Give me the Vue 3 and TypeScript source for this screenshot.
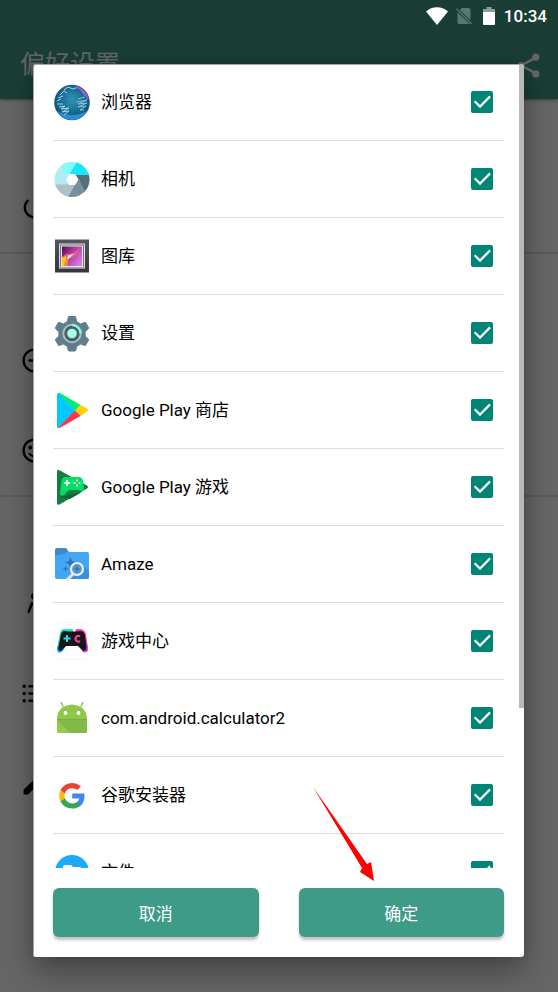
<script setup lang="ts">
import { ref } from 'vue'

interface AppItem {
  id: string
  name: string
  checked: boolean
}

const apps = ref<AppItem[]>([
  { id: 'browser', name: '浏览器', checked: true },
  { id: 'camera', name: '相机', checked: true },
  { id: 'gallery', name: '图库', checked: true },
  { id: 'settings', name: '设置', checked: true },
  { id: 'store', name: 'Google Play 商店', checked: true },
  { id: 'games', name: 'Google Play 游戏', checked: true },
  { id: 'amaze', name: 'Amaze', checked: true },
  { id: 'gamecenter', name: '游戏中心', checked: true },
  { id: 'calculator', name: 'com.android.calculator2', checked: true },
  { id: 'google', name: '谷歌安装器', checked: true },
  { id: 'files', name: '文件', checked: true },
])

// Material glyphs of the preference rows, grouped by section
const sections: string[][] = [
  ['M13 3h-2v10h2V3zm4.83 2.17l-1.42 1.42C17.99 7.86 19 9.81 19 12c0 3.87-3.13 7-7 7s-7-3.13-7-7c0-2.19 1.01-4.14 2.58-5.42L6.17 5.17C4.23 6.82 3 9.26 3 12c0 4.97 4.03 9 9 9s9-4.03 9-9c0-2.74-1.23-5.18-3.17-6.83z'],
  [
    'M7 11v2h10v-2H7zm5-9C6.48 2 2 6.48 2 12s4.48 10 10 10 10-4.48 10-10S17.52 2 12 2zm0 18c-4.41 0-8-3.59-8-8s3.59-8 8-8 8 3.59 8 8-3.59 8-8 8z',
    'M12 2C6.47 2 2 6.47 2 12s4.47 10 10 10 10-4.5 10-10S17.5 2 12 2zm0 18c-4.42 0-8-3.58-8-8s3.58-8 8-8 8 3.58 8 8-3.58 8-8 8zM8.5 7.9a1.6 1.6 0 1 0 0 3.2 1.6 1.6 0 0 0 0-3.2zm7 0a1.6 1.6 0 1 0 0 3.2 1.6 1.6 0 0 0 0-3.2zM12 16c-1.5 0-2.8-.8-3.5-2H6.8c.8 2 2.8 3.5 5.2 3.5s4.4-1.5 5.2-3.5h-1.7c-.7 1.2-2 2-3.5 2z',
  ],
  [
    'M12 3a3 3 0 0 0-2 5.200 3 3 0 0 0 4 0A3 3 0 0 0 12 3zM9.300 10.500L6.500 17.500V20.500L8 19.500 11.300 11.300zM14.700 10.500L17.500 17.500V20.500L16 19.500 12.700 11.300z',
    'M3.500 4.500a1.500 1.500 0 1 0 0 3 1.500 1.500 0 0 0 0-3zm0 6a1.500 1.500 0 1 0 0 3 1.500 1.500 0 0 0 0-3zm0 6a1.500 1.500 0 1 0 0 3 1.500 1.500 0 0 0 0-3zM7 19h14v-2H7v2zm0-6h14v-2H7v2zm0-8v2h14V5H7z',
    'M3 17.250V21h3.750L17.810 9.940l-3.750-3.750L3 17.250zM20.710 7.040a1 1 0 0 0 0-1.410l-2.340-2.340a1 1 0 0 0-1.410 0l-1.830 1.830 3.750 3.750 1.830-1.830z',
  ],
]
</script>

<template>
  <div class="screen">
    <div class="page" inert>
      <header class="app-bar">
        <h1 class="title">偏好设置</h1>
        <svg class="glyph share" viewBox="0 0 24 24" aria-hidden="true">
          <path d="M18 5.500L6 12l12 6.500" fill="none" stroke="currentColor" stroke-width="2" />
          <circle cx="18" cy="5" r="3" /><circle cx="6" cy="12" r="3" /><circle cx="18" cy="19" r="3" />
        </svg>
      </header>
      <main class="content">
        <section v-for="(icons, s) in sections" :key="s" class="prefs">
          <div v-for="(d, i) in icons" :key="i" class="pref">
            <svg class="glyph" viewBox="0 0 24 24" aria-hidden="true"><path :d="d" /></svg>
          </div>
        </section>
      </main>
    </div>

    <div class="status">
      <svg class="wifi" viewBox="0 0 22 18" aria-hidden="true"><path d="M0 4.500C6-1.200 16-1.200 22 4.500L11 18z" fill="#fff" /></svg>
      <svg class="sim" viewBox="0 0 16 18" aria-hidden="true">
        <path d="M5.500 1H13q1.500 0 1.500 1.500V13.600L3.800 3zM1.500 5.200L13.600 17H3q-1.500 0-1.500-1.500z" fill="#5a766e" />
        <path d="M.5 1.800L15.500 17" stroke="#5a766e" stroke-width="1.400" />
      </svg>
      <svg class="battery" viewBox="0 0 12 18" aria-hidden="true">
        <path d="M3.500 0h5v2H12v4H0V2h3.500z" fill="#8d9f9a" /><path d="M0 5h12v12q0 1-1 1H1q-1 0-1-1z" fill="#fff" />
      </svg>
      <time>10:34</time>
    </div>

    <div class="scrim">
      <div class="dialog" role="dialog" aria-modal="true">
        <div class="list-wrap">
          <ul class="list">
            <li v-for="app in apps" :key="app.id">
              <label class="row">
                <svg class="icon" viewBox="0 0 38 38" aria-hidden="true">
                  <g v-if="app.id === 'browser'">
                    <defs>
                      <radialGradient id="globe" cx=".5" cy=".42" r=".58">
                        <stop offset="0" stop-color="#2e91b4" /><stop offset=".6" stop-color="#176a92" /><stop offset="1" stop-color="#124a78" />
                      </radialGradient>
                    </defs>
                    <circle cx="19" cy="19.500" r="17.800" fill="url(#globe)" />
                    <path d="M4 28q14 8 30 0-5 9-15 9T4 28z" fill="#278fd0" />
                    <g fill="none" stroke-width="1">
                      <path d="M11 7l4-3 5 2 5-2M7 12l4-4 3 2M5 15l5-2M4 18l4-2M4 21l6 0M6 24l6-1-4 3 8-1-7 4 7-1-5 4" stroke="#a7d7e8" />
                      <path d="M25 16l7-2M23 19l11-2-9 4 9-1-9 4 8-1-6 4 4 0" stroke="#83c4dc" />
                      <path d="M23 4q9 3 12 12" stroke="#c44be8" stroke-width="1.600" />
                      <path d="M28 7l4 6" stroke="#8d7ee0" />
                    </g>
                    <g stroke="#55b5ce" stroke-width=".7" stroke-dasharray=".7 2"><path d="M14 12h12M14 16h11M15 20h8M15 24h9" /></g>
                  </g>

                  <g v-else-if="app.id === 'camera'">
                    <clipPath id="lens"><circle cx="19" cy="19.500" r="17.500" /></clipPath>
                    <g clip-path="url(#lens)">
                      <path d="M0 0h38v38H0z" fill="#b2ebf2" />
                      <path d="M7 5L15 0h10L16 15h-3z" fill="#84fbff" />
                      <path d="M25 0h13v15H16z" fill="#18e5fb" />
                      <path d="M16 15h22v18h-7l-9-9z" fill="#546e7a" />
                      <path d="M26 19l7 14-8 6H14l8-15z" fill="#78909c" />
                      <path d="M0 24.500h22L13 40H0z" fill="#b0bec5" />
                    </g>
                    <path d="M16.500 14.500h5.500l3 5-3 5h-5.500l-3-5z" fill="#fff" stroke="#fff" stroke-linejoin="round" />
                  </g>

                  <g v-else-if="app.id === 'gallery'">
                    <defs>
                      <linearGradient id="frame" x2="0" y2="1"><stop stop-color="#55565f" /><stop offset="1" stop-color="#35333c" /></linearGradient>
                      <linearGradient id="photo" x2="1" y2=".7"><stop stop-color="#43104e" /><stop offset=".45" stop-color="#b63399" /><stop offset="1" stop-color="#d17be5" /></linearGradient>
                    </defs>
                    <path d="M2 2.500h34v33H2z" fill="url(#frame)" />
                    <path d="M6 6.500h26v25H6z" fill="#dedee0" /><path d="M7 7.500h24v23H7z" fill="#77717a" />
                    <path d="M8 8.500h22V30H8z" fill="#e6e6e8" />
                    <path d="M9 9.500h20V29H9z" fill="url(#photo)" />
                    <path d="M9 29V20q4-4 9-3 5-2 9-6-3 8-9 10-5 2-5 8z" fill="#e5628b" />
                    <path d="M9 29v-8l4-2v4l-2 6z" fill="#ffc414" />
                    <path d="M11 29q0-5 5-8l-2 8z" fill="#f58a3c" />
                    <path d="M15 18.500l6-2-4 4-3 2z" fill="#ffe3dc" />
                  </g>

                  <g v-else-if="app.id === 'settings'">
                    <path d="M15.500 2.500h7l1.300 5.200 3.700 2.200 4.900-1.600 3.400 5.900-3.700 3.600v4.300l3.700 3.600-3.400 5.900-4.900-1.500-3.700 2.100-1.300 4.800h-7l-1.300-4.800-3.700-2.100-4.900 1.500-3.400-5.900 3.700-3.600v-4.300l-3.700-3.600 3.400-5.900 4.900 1.600 3.700-2.200z" fill="#607d8b" stroke="#607d8b" stroke-linejoin="round" />
                    <circle cx="19" cy="19.500" r="8.700" fill="#455a64" stroke="#b0bec5" stroke-width="2" />
                    <path d="M19 11a8.500 8.500 0 0 1 8.500 8.500" fill="none" stroke="#86f5df" stroke-width="2.500" />
                    <circle cx="19" cy="19.500" r="5.200" fill="#a7ffeb" stroke="#526973" />
                  </g>

                  <g v-else-if="app.id === 'store'">
                    <path d="M4 3.500q0-2 2-1.500l17.500 17L5 37q-1 0-1-1.500z" fill="#00c8ff" />
                    <path d="M5 2q1-.5 2 .1L27.500 14 22 19.500z" fill="#00ee76" />
                    <path d="M27.500 14l6.600 3.800q1.900 1.200 0 2.400L27.500 25 22 19.500z" fill="#ffcd05" />
                    <path d="M5 37l17-17.500 5.500 5.500L7 36.800q-1 .6-2 .2z" fill="#f93749" />
                  </g>

                  <g v-else-if="app.id === 'games'">
                    <path d="M4 4q0-3 2.500-1.800L34 17.600q2 1.500 0 3L6.500 36.400Q4 37.500 4 34.800z" fill="#167d42" />
                    <path d="M7 29L29 24l-12 7z" fill="#116637" />
                    <path d="M12.500 9h13q4 0 4.500 4l1 6.500q0 3.500-3.500 3.200L24 22H16l-5 5q-4 2-4-2.500L8.500 13q.5-4 4-4z" fill="#06dc67" />
                    <path d="M14 12v6M11 15h6" stroke="#fff" stroke-width="1.600" />
                    <g fill="#e3fff0"><circle cx="24" cy="12.500" r="1.100" /><circle cx="24" cy="17.500" r="1.100" /><circle cx="21.500" cy="15" r="1.100" /><circle cx="26.500" cy="15" r="1.100" /></g>
                  </g>

                  <g v-else-if="app.id === 'amaze'">
                    <path d="M2 5q0-2 2-2h9l3 4h-1v7H2z" fill="#4286ca" />
                    <path d="M2 10q8 0 12-3h20q2 0 2 2v23q0 2-2 2H4q-2 0-2-2z" fill="#42a5f5" />
                    <path d="M27 18l9 8v6q0 2-2 2H17l1-3z" fill="#368fe0" />
                    <path d="M17.500 12l1.500 4 4 1.500-4 1.500-1.500 4-1.500-4-4-1.500 4-1.500z" fill="#2e71bd" />
                    <path d="M12.500 21l.8 2 2 .8-2 .8-.8 2-.8-2-2-.8 2-.8z" fill="#2e71bd" />
                    <path d="M20 29l-5.500 5.500" stroke="#e8e7e8" stroke-width="3" stroke-linecap="round" />
                    <circle cx="24" cy="24" r="6" fill="#5d96ce" stroke="#efefef" stroke-width="2.200" />
                    <path d="M24 20.500l1 2.500 2.500 1-2.500 1-1 2.500-1-2.500-2.500-1 2.500-1z" fill="#3976b8" />
                  </g>

                  <g v-else-if="app.id === 'gamecenter'">
                    <rect x=".5" y=".5" width="37" height="37" rx="8" fill="#fff" stroke="#f6f6f6" />
                    <path d="M11 7h9v5L10 29q-5 3-6-2L7 11q1-4 4-4z" fill="#1ce3c2" />
                    <path d="M4.200 24l6 4Q5 34 4 27z" fill="#358cff" />
                    <path d="M23 7h5q4 1 5 5l2 15q0 4-5 3l-9-17z" fill="#ff42a0" />
                    <path d="M34 21l1 6q0 4-5 3l-2-4z" fill="#d63cff" />
                    <path d="M11 9q8 1 16 0 4 0 5 4l1.500 12q0 5-4 3.500L25 24H13l-4.500 4.500Q5 30 5.500 25L8 12q1-3 3-3z" fill="#17151c" />
                    <path d="M14 13v7M10.500 16.500h7" stroke="#29d8eb" stroke-width="2" />
                    <path d="M27 14.500a2.800 2.800 0 1 0 0 4.500" fill="none" stroke="#ff42a0" stroke-width="2" />
                  </g>

                  <g v-else-if="app.id === 'calculator'">
                    <path d="M10 7L8 3.500M28 7l2-3.500" stroke="#8bc34a" stroke-width="1.500" stroke-linecap="round" />
                    <path d="M4 20q0-8 6-12 9-5 18 0 6 4 6 12v12q0 2-2 2H6q-2 0-2-2z" fill="#8fc84b" />
                    <path d="M4 20.500h30V32q0 2-2 2H18L4 21z" fill="#82b947" />
                    <path d="M4 20.500h30" stroke="#7cad43" />
                    <path d="M4 21l12 13H6q-2 0-2-2z" fill="#91ca4c" />
                    <circle cx="12.500" cy="14" r="1.900" fill="#fff" /><circle cx="25.500" cy="14" r="1.900" fill="#fff" />
                  </g>

                  <g v-else-if="app.id === 'google'">
                    <g transform="translate(6.500 7)">
                      <path d="M25 13c0-.9-.1-1.800-.2-2.600H12.700v5h7a6 6 0 0 1-2.600 3.900v3.300h4.200C23.700 20.300 25 17 25 13z" fill="#4285f4" />
                      <path d="M12.700 25.500c3.500 0 6.400-1.100 8.600-3.100l-4.200-3.200a7.800 7.800 0 0 1-11.700-4H1.100v3.300a13 13 0 0 0 11.600 7z" fill="#34a853" />
                      <path d="M5.400 15.200a7.600 7.600 0 0 1 0-4.900V6.900H1.100a13 13 0 0 0 0 11.600z" fill="#fbbc05" />
                      <path d="M12.700 5.200c1.900 0 3.600.7 5 1.900l3.700-3.700A13 13 0 0 0 1.100 6.900l4.300 3.400a7.700 7.700 0 0 1 7.300-5.100z" fill="#ea4335" />
                    </g>
                  </g>

                  <g v-else>
                    <circle cx="19" cy="19" r="17" fill="#1caaf4" />
                    <path d="M10 14q0-2 2-2h6l2 2h7q1 0 1 1v11H10z" fill="#fff" />
                  </g>
                </svg>
                <span class="name">{{ app.name }}</span>
                <input v-model="app.checked" class="check" type="checkbox" />
              </label>
            </li>
          </ul>
          <div class="thumb"></div>
        </div>

        <div class="actions">
          <button type="button">取消</button>
          <button type="button">确定</button>
          <svg class="arrow" viewBox="0 0 62 95" aria-hidden="true">
            <path d="M0 0L54 77 58 75 61 94 47 85 49 81z" fill="#f00" />
          </svg>
        </div>
      </div>
    </div>
  </div>
</template>

<style>
body {
  margin: 0;
  background: #666;
}
</style>

<style scoped>
.screen {
  position: relative;
  height: 100vh;
  overflow: hidden;
  background: #666;
  font-family: Roboto, "Noto Sans CJK SC", sans-serif;
  font-size: 17px;
  color: #000;
}
.app-bar {
  display: flex;
  align-items: center;
  justify-content: space-between;
  box-sizing: border-box;
  height: 99px;
  padding: 31px 15px 0 20px;
  background: #1a3e36;
  color: #666;
  box-shadow: 0 1px 3px rgba(0, 0, 0, 0.4);
}
.title {
  margin: 0;
  font-size: 25px;
  font-weight: 400;
  line-height: 36px;
}
.glyph {
  display: block;
  width: 29px;
  height: 29px;
  fill: currentColor;
}
.content {
  padding-top: 2px;
}
.prefs {
  padding-top: 61px;
  border-bottom: 2px solid #5a5a5a;
}
.prefs:last-child {
  border-bottom: 0;
}
.pref {
  display: flex;
  align-items: center;
  height: 90px;
  padding: 0 20px;
}
.status {
  position: absolute;
  top: 0;
  right: 0;
  left: 0;
  display: flex;
  align-items: center;
  justify-content: flex-end;
  height: 31px;
  padding-right: 11px;
  color: #fff;
}
.wifi {
  width: 22px;
  height: 18px;
  margin-right: 8px;
}
.sim {
  width: 16px;
  height: 18px;
  margin-right: 11px;
}
.battery {
  width: 12px;
  height: 18px;
  margin-right: 9px;
}
.status time {
  font-weight: 500;
  line-height: 24px;
}
.scrim {
  position: absolute;
  inset: 0;
  display: flex;
  box-sizing: border-box;
  padding: 64px 34px 35px 33px;
}
.dialog {
  display: flex;
  flex: 1;
  flex-direction: column;
  min-width: 0;
  border-radius: 3px;
  background: #fff;
  box-shadow: inset 1px 1px #a3a8a6, 0 14px 32px rgba(0, 0, 0, 0.35), 0 0 10px rgba(0, 0, 0, 0.1);
}
.list-wrap {
  position: relative;
  flex: 1;
  min-height: 0;
}
.list {
  box-sizing: border-box;
  height: 100%;
  margin: 0;
  padding: 0 20px;
  overflow-y: auto;
  scrollbar-width: none;
  list-style: none;
}
.row {
  display: flex;
  align-items: center;
  gap: 10px;
  box-sizing: border-box;
  height: 77px;
  padding-right: 11px;
  border-bottom: 1px solid #dcdcdc;
}
.icon {
  flex: none;
  width: 38px;
  height: 38px;
}
.name {
  flex: 1;
  line-height: 24px;
}
.check {
  position: relative;
  width: 22px;
  height: 22px;
  margin: 0;
  border-radius: 2px;
  appearance: none;
  border: 2px solid #757575;
}
.check:checked {
  border: 0;
  background: #018577;
}
.check:checked::before {
  display: block;
  width: 22px;
  height: 22px;
  background: #fff;
  clip-path: polygon(13% 50%, 20% 43%, 41% 64%, 83% 21%, 90% 28%, 41% 78%);
  content: "";
}
.thumb {
  position: absolute;
  top: 1px;
  right: 0;
  width: 5px;
  height: 80%;
  background: #b8b8b8;
}
.actions {
  position: relative;
  display: grid;
  grid-template-columns: 1fr 1fr;
  gap: 40px;
  padding: 20px;
}
.actions button {
  height: 49px;
  padding: 0;
  border: 0;
  border-radius: 6px;
  background: #3d9b88;
  box-shadow: 0 3px 3px rgba(0, 0, 0, 0.25);
  color: #fff;
  font: inherit;
}
.arrow {
  position: absolute;
  right: 149px;
  bottom: 75px;
  width: 62px;
  height: 95px;
  pointer-events: none;
}
</style>
